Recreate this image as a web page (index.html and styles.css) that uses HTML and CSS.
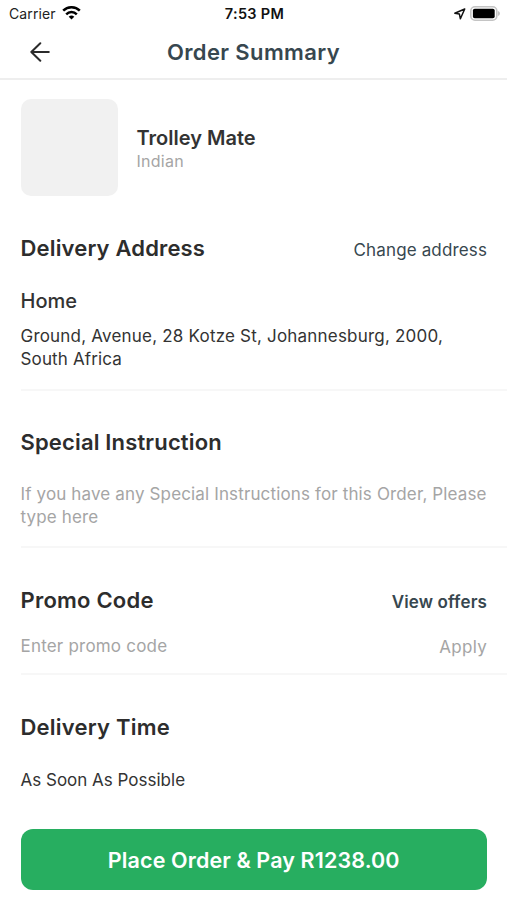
FILE: index.html
```html
<!DOCTYPE html>
<html lang="en">
<head>
<meta charset="utf-8">
<title>Order Summary</title>
<link rel="stylesheet" href="styles.css">
</head>
<body>
<div class="status">
  <div class="status-left">
    <span>Carrier</span>
    <svg class="wifi" width="19" height="14" viewBox="0 0 19 14" fill="none" stroke="#000" stroke-width="2.5"><path d="M1.2 4.7a11.7 11.7 0 0 1 16.6 0"/><path d="M4.2 8.3a7.5 7.5 0 0 1 10.6 0"/><path d="M9.5 13.6 6.7 10.8a4 4 0 0 1 5.6 0z" fill="#000" stroke="none"/></svg>
  </div>
  <span class="time">7:53 PM</span>
  <div class="status-right">
    <svg width="13" height="12" viewBox="0 0 13 12" fill="none" stroke="#111" stroke-width="1.5" stroke-linejoin="round"><path d="M11.7 1 1.8 5.3l4.6.8 1 4.7z"/></svg>
    <svg width="30" height="15" viewBox="0 0 30 15"><rect x=".8" y=".8" width="26" height="13.4" rx="4.2" fill="#fff" stroke="#c4c4c4" stroke-width="1.6"/><rect x="2.9" y="2.7" width="21.8" height="9.6" rx="1.8"/><path d="M28 5v5q2-.8 2-2.5T28 5z" fill="#c4c4c4"/></svg>
  </div>
</div>
<header class="header">
  <svg class="back" width="20" height="20" viewBox="0 0 20 20" fill="none" stroke="#2b2b2b" stroke-width="2" stroke-linecap="round" stroke-linejoin="round"><path d="M18.800 10H1.300M10.300 1.200 1.300 10l9 8.800"/></svg>
  <h1>Order Summary</h1>
</header>
<main>
  <section class="store">
    <div class="thumb"></div>
    <div class="store-text">
      <div class="name">Trolley Mate</div>
      <div class="kind">Indian</div>
    </div>
  </section>
  <section class="address divided">
    <div class="row"><h2 class="snug">Delivery Address</h2><a class="link">Change address</a></div>
    <h3>Home</h3>
    <p><span class="wide">Ground, Avenue, 28 Kotze St, Johannesburg, 2000,</span><br>South Africa</p>
  </section>
  <section class="note divided">
    <h2 class="snug">Special Instruction</h2>
    <p class="muted">If you have any Special Instructions for this Order, Please type here</p>
  </section>
  <section class="promo divided">
    <div class="row"><h2>Promo Code</h2><a class="link strong">View offers</a></div>
    <div class="row entry muted"><span class="wide">Enter promo code</span><span class="apply">Apply</span></div>
  </section>
  <section class="when">
    <h2>Delivery Time</h2>
    <p class="tight">As Soon As Possible</p>
  </section>
  <button class="pay">Place Order &amp; Pay R1238.00</button>
</main>
</body>
</html>
```
FILE: styles.css
```css
* { box-sizing: border-box; margin: 0; padding: 0; }
body { background: #fff; color: #333; font: 400 17px/23px Inter, sans-serif; letter-spacing: .14px; overflow: hidden; }
svg { display: block; }
.status { height: 27px; padding: 0 7px 0 9px; display: grid; grid-template-columns: 1fr auto 1fr; align-items: center; font-size: 14px; line-height: 17px; color: #222; letter-spacing: .1px; }
.status-left, .status-right { display: flex; align-items: center; }
.status-left { gap: 6px; }
.wifi { margin-top: -1px; }
.status-right { justify-content: flex-end; gap: 4px; }
.time { font-weight: 600; font-size: 14.5px; letter-spacing: .3px; color: #111; }
.header { height: 53px; border-bottom: 2px solid #eee; display: grid; grid-template-columns: 1fr auto 1fr; align-items: center; padding: 0 30px 2px; }
h1 { font-size: 22px; line-height: 28px; font-weight: 600; letter-spacing: .37px; color: #37474f; }
main { padding-left: 20.5px; }
.store { display: flex; gap: 19px; align-items: center; margin-top: 19px; }
.thumb { width: 97px; height: 97px; border-radius: 10px; background: #f1f1f1; }
.store-text { padding-top: 3px; }
.name { font-size: 20px; line-height: 24px; font-weight: 600; letter-spacing: 0; color: #333; }
.kind { font-size: 16px; line-height: 22px; color: #a5a5a5; letter-spacing: .25px; }
.row { display: flex; justify-content: space-between; align-items: center; padding-right: 20px; }
.divided { border-bottom: 2px solid #f7f7f7; }
h2 { font-size: 22px; line-height: 28px; font-weight: 600; letter-spacing: .22px; color: #2d2d2d; }
h2.snug { letter-spacing: .16px; }
h3 { font-size: 20px; line-height: 24px; font-weight: 500; letter-spacing: 0; color: #333; margin: 27px 0 12px; }
.link { color: #37474f; padding-top: 4px; }
.strong { font-weight: 600; }
.wide { letter-spacing: .2px; }
.tight { letter-spacing: 0; }
.muted { color: #a5a5a5; }
.address { margin-top: 38px; padding-bottom: 18px; }
.note { padding: 37px 0 17px; }
.note p { width: 476px; margin-top: 27px; letter-spacing: .14px; }
.promo { padding: 38px 0 15px; }
.entry { margin-top: 21px; }
.apply { position: relative; top: 1px; letter-spacing: .3px; }
.when { padding-top: 38px; }
.when p { margin-top: 28px; }
.pay { display: block; width: calc(100% - 20px); height: 61px; margin-top: 37px; border: 0; border-radius: 12px; background: #27ae60; color: #fff; font: 600 21.5px/28px Inter, sans-serif; letter-spacing: .12px; padding-top: 1px; }
```
